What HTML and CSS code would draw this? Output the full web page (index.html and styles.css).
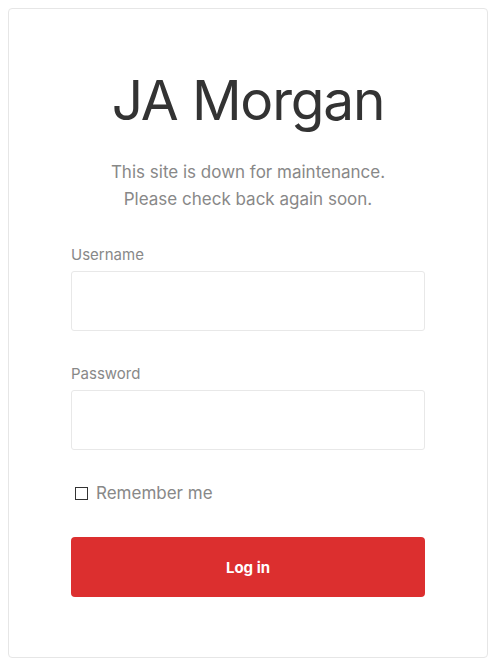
FILE: index.html
```html
<!DOCTYPE html>
<html lang="en">
<head>
    <meta charset="UTF-8">
    <meta name="viewport" content="width=device-width, initial-scale=1.0">
    <title>JA Morgan - Maintenance</title>
    <link rel="stylesheet" href="styles.css">
</head>
<body>
    <div class="login-card">
        <h1 class="site-title">JA Morgan</h1>
        <p class="notice">
            This site is down for maintenance.<br>
            Please check back again soon.
        </p>

        <form class="login-form" onsubmit="return false;">
            <label class="field-label" for="username">Username</label>
            <input class="field-input" type="text" id="username" autocomplete="off">

            <label class="field-label" for="password">Password</label>
            <input class="field-input" type="password" id="password">

            <label class="remember">
                <input type="checkbox" class="remember-box">
                <span>Remember me</span>
            </label>

            <button class="login-button" type="submit">Log in</button>
        </form>
    </div>
</body>
</html>
```

FILE: styles.css
```css
body {
    font-family: 'Inter', 'Liberation Sans', sans-serif;
    background-color: #ffffff;
    color: #333333;
    margin: 0;
    padding: 8px;
}
.login-card {
    width: 480px;
    height: 650px;
    box-sizing: border-box;
    border: 1px solid #e6e6e6;
    border-radius: 4px;
    padding: 56px 62px 0;
}
.site-title {
    margin: 0;
    text-align: center;
    font-size: 55px;
    font-weight: 400;
    line-height: 70px;
    color: #333333;
    letter-spacing: -1.2px;
}
.notice {
    margin: 24px 0 0;
    text-align: center;
    font-size: 17px;
    line-height: 27px;
    color: #888888;
}
.login-form {
    display: flex;
    flex-direction: column;
    margin-top: 32px;
}
.field-label {
    font-size: 15px;
    line-height: 20px;
    color: #888888;
    margin-bottom: 6px;
}
.field-input {
    height: 60px;
    box-sizing: border-box;
    border: 1px solid #e8e8e8;
    border-radius: 3px;
    margin: 0 0 33px;
    padding: 0 12px;
    font-size: 16px;
    outline: none;
}
.remember {
    display: flex;
    align-items: center;
    gap: 8px;
    font-size: 17px;
    color: #888888;
    margin: 0 0 34px 4px;
}
.remember-box {
    appearance: none;
    width: 13px;
    height: 13px;
    margin: 0;
    border: 1px solid #333333;
}
.login-button {
    height: 60px;
    border: none;
    border-radius: 4px;
    background-color: #dc2f2f;
    color: #ffffff;
    font-family: inherit;
    font-size: 15px;
    font-weight: bold;
    cursor: pointer;
}
```
